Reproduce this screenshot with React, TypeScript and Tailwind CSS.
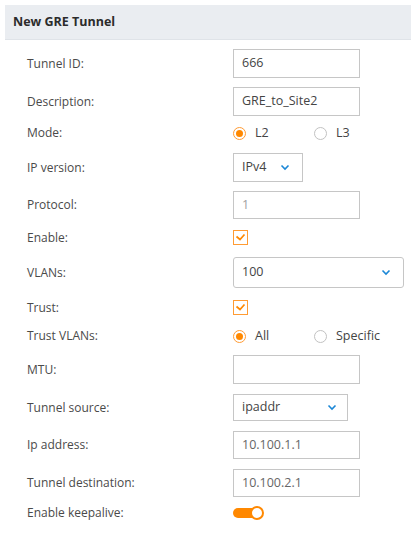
import React from 'react';

const ORANGE = '#ff8800';

const Chevron = () => (
  <svg width="10" height="7" viewBox="0 0 10 7" className="shrink-0">
    <path d="M1.5 1.5 L5 5 L8.5 1.5" fill="none" stroke="#1b87d6" strokeWidth="1.6" />
  </svg>
);

const Radio = ({ checked, label }: { checked?: boolean; label: string }) => (
  <div className="flex items-center w-[81px]">
    <span
      className={`w-[13px] h-[13px] rounded-full border flex items-center justify-center ${
        checked ? 'border-[#ff9b33]' : 'border-[#c2c2c2]'
      }`}
    >
      {checked && <span className="w-[7px] h-[7px] rounded-full bg-[#ff8800]" />}
    </span>
    <span className="ml-[9px] text-[12.5px] text-[#444]">{label}</span>
  </div>
);

const Check = () => (
  <span className="w-[15px] h-[15px] border border-[#ff9b33] flex items-center justify-center">
    <svg width="11" height="9" viewBox="0 0 11 9">
      <path d="M1.5 3.5 L5 6.5 L9.5 1.5" fill="none" stroke={ORANGE} strokeWidth="1.7" />
    </svg>
  </span>
);

const Input = ({ value, tone = 'text-[#444]', w = 'w-[127px]', h = 'h-[29px]' }: { value?: string; tone?: string; w?: string; h?: string }) => (
  <div className={`${w} ${h} ${tone} border border-[#c6c6c6] bg-white flex items-center pl-[8px] text-[12.5px]`}>
    {value}
  </div>
);

const Select = ({ value, w, h, pr, rounded }: { value: string; w: string; h: string; pr: string; rounded?: boolean }) => (
  <div
    className={`${w} ${h} ${pr} border border-[#c6c6c6] bg-white flex items-center justify-between pl-[8px] text-[12.5px] text-[#444] ${
      rounded ? 'rounded-[3px] pl-[6px]' : ''
    }`}
  >
    <span>{value}</span>
    <Chevron />
  </div>
);

const Row = ({ label, mt, h, children }: { label: string; mt: string; h: string; children: React.ReactNode }) => (
  <div className={`flex items-center ${mt} ${h}`}>
    <div className="w-[233px] pl-[27px] text-[12px] text-[#4a4a4a] shrink-0">{label}</div>
    {children}
  </div>
);

export default function App() {
  return (
    <div className="w-[419px] h-[534px] bg-white pt-[5px] overflow-hidden" style={{ fontFamily: '"Open Sans", "Noto Sans", sans-serif' }}>
      <div className="ml-[5px] w-[406px] h-[35px] bg-[#eaedf1] border-b border-[#dfe3e8] flex items-center pl-[8px]">
        <h2 className="text-[12.5px] font-bold text-[#2b2b2b]">New GRE Tunnel</h2>
      </div>

      <Row label="Tunnel ID:" mt="mt-[9px]" h="h-[29px]">
        <Input value="666" />
      </Row>
      <Row label="Description:" mt="mt-[9px]" h="h-[29px]">
        <Input value="GRE_to_Site2" />
      </Row>
      <Row label="Mode:" mt="mt-[10px]" h="h-[14px]">
        <Radio checked label="L2" />
        <Radio label="L3" />
      </Row>
      <Row label="IP version:" mt="mt-[13px]" h="h-[29px]">
        <Select value="IPv4" w="w-[70px]" h="h-[29px]" pr="pr-[12px]" />
      </Row>
      <Row label="Protocol:" mt="mt-[9px]" h="h-[28px]">
        <Input value="1" tone="text-[#a0a0a0]" h="h-[28px]" />
      </Row>
      <Row label="Enable:" mt="mt-[11px]" h="h-[15px]">
        <Check />
      </Row>
      <Row label="VLANs:" mt="mt-[12px]" h="h-[31px]">
        <Select value="100" w="w-[171px]" h="h-[31px]" pr="pr-[12px]" rounded />
      </Row>
      <Row label="Trust:" mt="mt-[12px]" h="h-[15px]">
        <Check />
      </Row>
      <Row label="Trust VLANs:" mt="mt-[14px]" h="h-[14px]">
        <Radio checked label="All" />
        <Radio label="Specific" />
      </Row>
      <Row label="MTU:" mt="mt-[12px]" h="h-[29px]">
        <Input />
      </Row>
      <Row label="Tunnel source:" mt="mt-[10px]" h="h-[27px]">
        <Select value="ipaddr" w="w-[115px]" h="h-[27px]" pr="pr-[10px]" />
      </Row>
      <Row label="Ip address:" mt="mt-[10px]" h="h-[28px]">
        <Input value="10.100.1.1" tone="text-[#666]" h="h-[28px]" />
      </Row>
      <Row label="Tunnel destination:" mt="mt-[10px]" h="h-[28px]">
        <Input value="10.100.2.1" tone="text-[#666]" h="h-[28px]" />
      </Row>
      <Row label="Enable keepalive:" mt="mt-[9px]" h="h-[14px]">
        <div className="relative w-[31px] h-[14px]">
          <div className="absolute left-0 top-[2px] w-[28px] h-[10px] rounded-full bg-[#ff8800]" />
          <div className="absolute right-0 top-0 w-[14px] h-[14px] rounded-full bg-white border-[2px] border-[#ff8800]" />
        </div>
      </Row>
    </div>
  );
}
